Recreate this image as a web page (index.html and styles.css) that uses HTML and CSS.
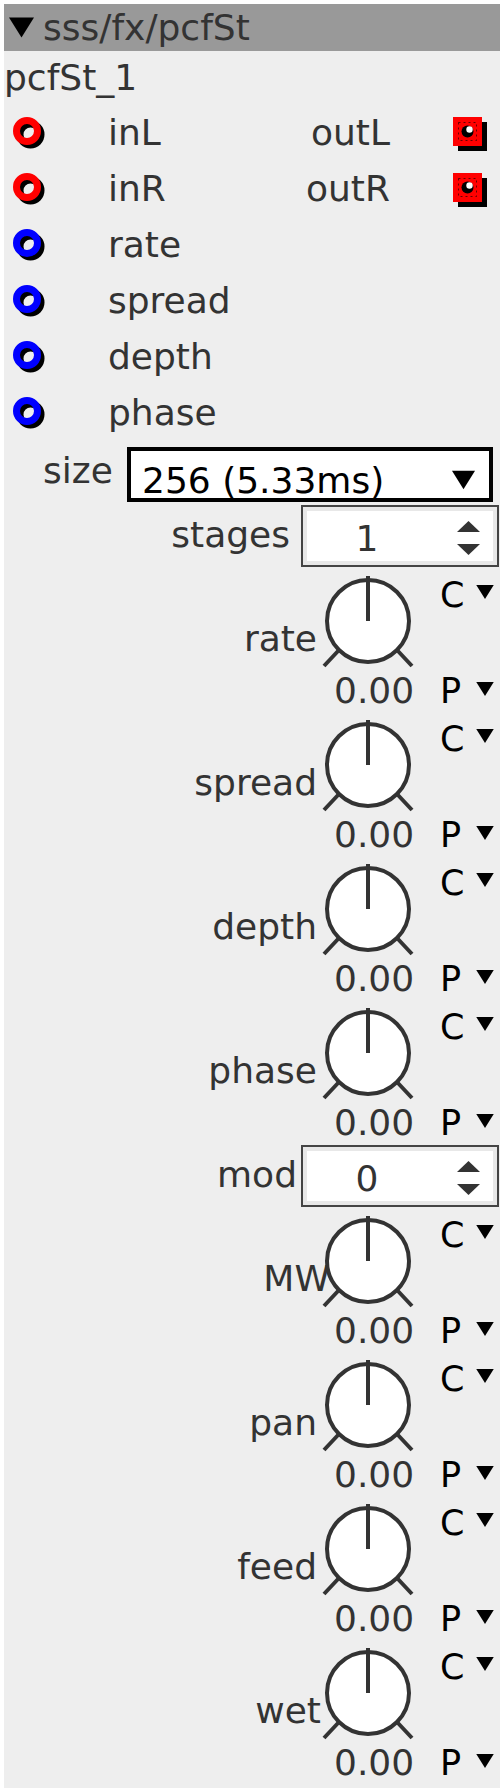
FILE: index.html
```html
<!DOCTYPE html>
<html lang="en">
<head>
    <meta charset="UTF-8">
    <title>sss/fx/pcfSt</title>
    <link rel="stylesheet" href="styles.css">
</head>
<body>

<!-- shared drawings -->
<svg class="defs" width="0" height="0">
    <symbol id="tri" viewBox="0 0 20 16"><path d="M0 0 H20 L10 16 Z"/></symbol>
    <symbol id="knob" viewBox="0 0 96 96">
        <circle cx="48" cy="46" r="41" fill="#fff" stroke="#333" stroke-width="4"/>
        <line x1="48" y1="1" x2="48" y2="46" stroke="#333" stroke-width="4"/>
        <line x1="19" y1="75" x2="4" y2="91" stroke="#333" stroke-width="4"/>
        <line x1="77" y1="75" x2="92" y2="91" stroke="#333" stroke-width="4"/>
    </symbol>
    <symbol id="spin-arrows" viewBox="0 0 23 34">
        <path d="M0 11 L11.5 0 L23 11 Z" fill="#333"/>
        <path d="M0 23 H23 L11.5 34 Z" fill="#333"/>
    </symbol>
    <symbol id="jack-red" viewBox="0 0 36 36">
        <circle cx="17.5" cy="17.5" r="10.5" fill="none" stroke="#000" stroke-width="7"/>
        <circle cx="14" cy="14" r="10.5" fill="none" stroke="#f00" stroke-width="7"/>
    </symbol>
    <symbol id="jack-blue" viewBox="0 0 36 36">
        <circle cx="17.5" cy="17.5" r="10.5" fill="none" stroke="#000" stroke-width="7"/>
        <circle cx="14" cy="14" r="10.5" fill="none" stroke="#00f" stroke-width="7"/>
    </symbol>
    <symbol id="outlet" viewBox="0 0 36 36">
        <rect x="5" y="5" width="29" height="29" fill="#000"/>
        <rect x="0" y="0" width="29" height="29" fill="#f00"/>
        <rect x="5.5" y="5.5" width="18" height="18" fill="none" stroke="#000" stroke-width="1" stroke-dasharray="2 3" opacity="0.6"/>
        <circle cx="14.5" cy="14.5" r="6" fill="#000"/>
        <circle cx="16.5" cy="12.5" r="3.2" fill="#fff"/>
    </symbol>
</svg>

<div class="node">
    <div class="node-title">
        <svg class="title-arrow"><use href="#tri"/></svg>
        <span>sss/fx/pcfSt</span>
    </div>
    <div class="instance">pcfSt_1</div>

    <div class="ports">
        <div class="port-row">
            <svg class="jack"><use href="#jack-red"/></svg>
            <span class="port-name">inL</span>
            <span class="out-name">outL</span>
            <svg class="outlet"><use href="#outlet"/></svg>
        </div>
        <div class="port-row">
            <svg class="jack"><use href="#jack-red"/></svg>
            <span class="port-name">inR</span>
            <span class="out-name">outR</span>
            <svg class="outlet"><use href="#outlet"/></svg>
        </div>
        <div class="port-row">
            <svg class="jack"><use href="#jack-blue"/></svg>
            <span class="port-name">rate</span>
        </div>
        <div class="port-row">
            <svg class="jack"><use href="#jack-blue"/></svg>
            <span class="port-name">spread</span>
        </div>
        <div class="port-row">
            <svg class="jack"><use href="#jack-blue"/></svg>
            <span class="port-name">depth</span>
        </div>
        <div class="port-row">
            <svg class="jack"><use href="#jack-blue"/></svg>
            <span class="port-name">phase</span>
        </div>
    </div>

    <div class="size-row">
        <span class="size-label">size</span>
        <div class="combo">
            <span>256 (5.33ms)</span>
            <svg class="combo-arrow"><use href="#tri"/></svg>
        </div>
    </div>

    <div class="spin-row">
        <span class="spin-label">stages</span>
        <div class="spin">
            <span class="spin-value">1</span>
            <svg class="spin-arrows"><use href="#spin-arrows"/></svg>
        </div>
    </div>

    <div id="knobs-a"></div>

    <div class="spin-row spin-row-mod">
        <span class="spin-label">mod</span>
        <div class="spin">
            <span class="spin-value">0</span>
            <svg class="spin-arrows"><use href="#spin-arrows"/></svg>
        </div>
    </div>

    <div id="knobs-b"></div>
</div>

<script>
    // knob parameters of the patch (wide labels run under the knob)
    const knobsA = [{ name: "rate" }, { name: "spread" }, { name: "depth" }, { name: "phase" }];
    const knobsB = [{ name: "MW", cls: "knob-label-mw" }, { name: "pan" }, { name: "feed" }, { name: "wet", cls: "knob-label-wet" }];

    function renderKnobs(containerId, knobs) {
        const container = document.getElementById(containerId);
        knobs.forEach(knob => {
            const block = document.createElement("div");
            block.classList.add("knob-block");
            block.innerHTML = `
                <span class="knob-label ${knob.cls || ""}">${knob.name}</span>
                <svg class="knob"><use href="#knob"/></svg>
                <div class="mode mode-top"><span class="mode-letter">C</span><svg class="mode-arrow"><use href="#tri"/></svg></div>
                <span class="knob-value">0.00</span>
                <div class="mode mode-bottom"><span class="mode-letter">P</span><svg class="mode-arrow"><use href="#tri"/></svg></div>
            `;
            container.appendChild(block);
        });
    }

    renderKnobs("knobs-a", knobsA);
    renderKnobs("knobs-b", knobsB);
</script>

</body>
</html>
```

FILE: styles.css
```css
body {
    margin: 4px;
    background-color: #fff;
    font-family: "DejaVu Sans", sans-serif;
}

.defs {
    position: absolute;
}

.node {
    width: 496px;
    background-color: #eee;
    color: #333;
    font-size: 36px;
    padding-bottom: 5px;
}

/* title bar */
.node-title {
    display: flex;
    align-items: center;
    height: 47px;
    line-height: 47px;
    background-color: #999;
    white-space: nowrap;
}

.title-arrow {
    width: 25px;
    height: 21px;
    margin-left: 5px;
    margin-right: 9px;
    fill: #000;
}

.instance {
    height: 54px;
    line-height: 54px;
}

/* inlets and outlets */
.port-row {
    display: grid;
    grid-template-columns: 104px 1fr auto 110px;
    height: 56px;
    line-height: 56px;
}

.jack {
    width: 36px;
    height: 36px;
    margin: 12px 0 0 9px;
}

.outlet {
    width: 36px;
    height: 36px;
    margin: 12px 0 0 63px;
}

/* size combo */
.size-row {
    display: flex;
    height: 64px;
}

.size-label {
    width: 123px;
    padding-left: 39px;
    box-sizing: border-box;
    line-height: 60px;
}

.combo {
    display: flex;
    justify-content: space-between;
    width: 366px;
    height: 55px;
    margin-top: 6px;
    padding: 12px 14px 0 11px;
    box-sizing: border-box;
    border: 4px solid #000;
    background-color: #fff;
    color: #000;
    line-height: 35px;
    white-space: nowrap;
}

.combo-arrow {
    width: 23px;
    height: 22px;
    margin-top: 6px;
    fill: #000;
}

/* spin boxes */
.spin-row {
    display: grid;
    grid-template-columns: 297px 198px;
    height: 62px;
}

.spin-label {
    text-align: right;
    padding-right: 11px;
    line-height: 60px;
}

.spin-row-mod {
    height: 64px;
}

.spin-row-mod .spin-label {
    padding-right: 4px;
    line-height: 64px;
}

.spin-row-mod .spin {
    margin-top: 2px;
}

.spin {
    display: flex;
    height: 62px;
    box-sizing: border-box;
    border: 2px solid #444;
    background-color: #fff;
    box-shadow: inset 0 0 0 4px #e8e8e8;
}

.spin-value {
    width: 128px;
    text-align: center;
    padding-top: 7px;
    line-height: 50px;
}

.spin-arrows {
    width: 23px;
    height: 34px;
    margin: 14px 0 0 26px;
}

/* knobs */
.knob-block {
    display: grid;
    grid-template-columns: 316px 96px 1fr;
    grid-template-rows: 104px 40px;
    height: 144px;
}

.knob-label {
    grid-column: 1;
    grid-row: 1;
    text-align: right;
    padding-right: 3px;
    line-height: 40px;
    margin-top: 52px;
    white-space: nowrap;
}

.knob-label-mw {
    margin-right: -13px;
}

.knob-label-wet {
    margin-right: -4px;
}

.knob {
    grid-column: 2;
    grid-row: 1;
    width: 96px;
    height: 96px;
    margin-top: 8px;
}

.knob-value {
    grid-column: 2;
    grid-row: 2;
    padding-left: 14px;
    line-height: 40px;
    white-space: nowrap;
}

.mode {
    grid-column: 3;
    display: flex;
    align-items: flex-start;
    padding-left: 24px;
    color: #000;
    font-size: 35px;
    line-height: 40px;
}

.mode-top {
    grid-row: 1;
    margin-top: 8px;
}

.mode-bottom {
    grid-row: 2;
}

.mode-letter {
    width: 36px;
}

.mode-arrow {
    width: 18px;
    height: 14px;
    fill: #000;
}

.mode-top .mode-arrow {
    margin-top: 10px;
}

.mode-bottom .mode-arrow {
    margin-top: 11px;
}
```
